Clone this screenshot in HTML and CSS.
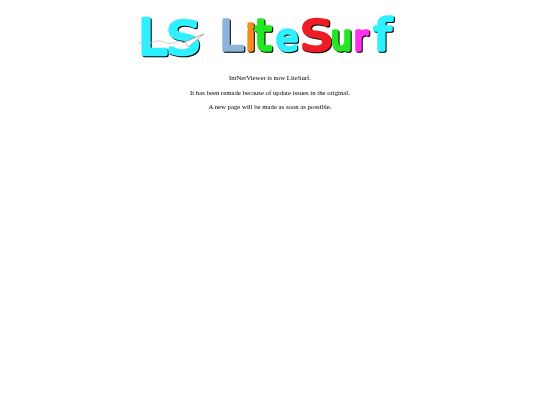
FILE: index.html
```html
<!DOCTYPE html>
<html lang="en">
  <head>
    <meta charset="UTF-8" />
    <meta name="viewport" content="width=device-width, initial-scale=1.0" />
    <title>LiteSurf</title>
    <link rel="stylesheet" href="styles.css">
  </head>
  <body>
    <div class="logo">
      <svg class="logo-art" width="270" height="70" viewBox="0 0 270 70" role="img" aria-label="LS LiteSurf">
        <g class="letters">
          <text x="4" y="54" class="big thick cyan">L</text>
          <text x="32" y="54" class="big-s cyan" textLength="33" lengthAdjust="spacingAndGlyphs">S</text>
          <text x="85" y="50" class="cap blue">L</text>
          <text x="111" y="50" class="low orange">i</text>
          <text x="120" y="50" class="tall green">t</text>
          <text x="141" y="50" class="wide cyan">e</text>
          <text x="166" y="50" class="cap-s red" textLength="31" lengthAdjust="spacingAndGlyphs">S</text>
          <text x="196" y="50" class="low green">u</text>
          <text x="219" y="50" class="low pink">r</text>
          <text x="239" y="50" class="tall-f cyan" textLength="17" lengthAdjust="spacingAndGlyphs">f</text>
        </g>
        <path class="trail" d="M3 42c5 2 9 3 13 1s8-3 13-1 8 2 12 0 4 0 7 0" />
        <path class="plane" d="M47 43 69 34 53 47 50 42Z" />
        <path class="plane-fold" d="M50 42 69 34" />
      </svg>
    </div>
    <div class="message">
      <p>IntNetViewer is now LiteSurf.</p>
      <p>It has been remade because of update issues in the original.</p>
      <p>A new page will be made as soon as possible.</p>
    </div>
  </body>
</html>
```

FILE: styles.css
```css
body {
  background: #fff;
  color: #000;
  font-family: "Liberation Serif", serif;
  text-align: center;
  margin: 0;
  padding: 0;
}

.logo {
  display: flex;
  justify-content: center;
}

.logo-art {
  display: block;
  filter: blur(0.4px);
}

.letters {
  filter: drop-shadow(1px 1.5px 0 #000);
}

.letters text {
  font-family: "DejaVu Sans", sans-serif;
  stroke-width: 3.5px;
  stroke-linejoin: round;
  stroke: currentColor;
}

.letters .thick {
  stroke-width: 4.5px;
}

.big { font-size: 48px; }
.big-s { font-size: 44px; }
.cap { font-size: 41px; }
.cap-s { font-size: 40px; }
.low { font-size: 33px; }
.wide { font-size: 36px; }
.tall { font-size: 42px; }
.tall-f { font-size: 43px; }

.cyan { color: #2ef0ff; fill: #2ef0ff; }
.blue { color: #8fb4dc; fill: #8fb4dc; }
.orange { color: #f98a1c; fill: #f98a1c; }
.green { color: #22e822; fill: #22e822; }
.red { color: #ee1c24; fill: #ee1c24; }
.pink { color: #ff30f0; fill: #ff30f0; }

.trail {
  fill: none;
  stroke: #bbb;
  stroke-width: 0.7;
}

.plane {
  fill: #fff;
  stroke: #999;
  stroke-width: 0.6;
}

.plane-fold {
  fill: none;
  stroke: #999;
  stroke-width: 0.5;
}

.message {
  margin-top: 4px;
  font-size: 6.75px;
  filter: blur(0.25px);
}

.message p {
  margin: 0 0 6.5px;
  line-height: 8px;
}
```
